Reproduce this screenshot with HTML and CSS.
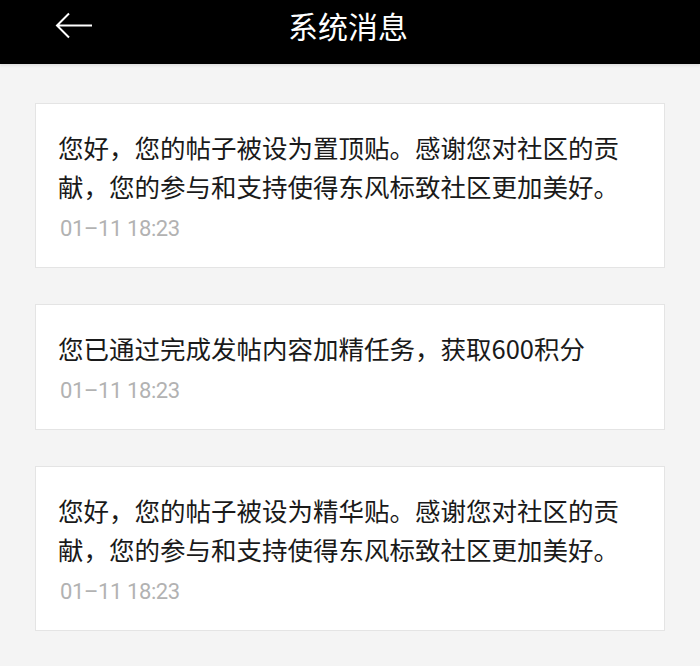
FILE: index.html
```html
<!DOCTYPE html>
<html lang="zh-CN">
<head>
  <meta charset="UTF-8">
  <meta name="viewport" content="width=device-width, initial-scale=1.0">
  <title>系统消息</title>
  <link rel="stylesheet" href="styles.css">
</head>
<body>
  <div class="top-bar">
    <span class="back-btn">
      <svg width="40" height="28" viewBox="0 0 40 28">
        <path d="M38 13.5 H3 M15 1.5 L3 13.5 L15 25.5" fill="none" stroke="#fff" stroke-width="2"/>
      </svg>
    </span>
    <h1 class="top-title">系统消息</h1>
  </div>

  <div class="msg-list">
    <div class="msg-card">
      <p class="msg-text">您好，您的帖子被设为置顶贴。感谢您对社区的贡献，您的参与和支持使得东风标致社区更加美好。</p>
      <div class="msg-time">01–11 18:23</div>
    </div>
    <div class="msg-card">
      <p class="msg-text">您已通过完成发帖内容加精任务，获取600积分</p>
      <div class="msg-time">01–11 18:23</div>
    </div>
    <div class="msg-card">
      <p class="msg-text">您好，您的帖子被设为精华贴。感谢您对社区的贡献，您的参与和支持使得东风标致社区更加美好。</p>
      <div class="msg-time">01–11 18:23</div>
    </div>
  </div>
</body>
</html>
```

FILE: styles.css
```css
/* page */
body {
  margin: 0;
  background-color: #f4f4f4;
  font-family: "Noto Sans CJK SC", "Noto Sans", sans-serif;
  color: #1a1a1a;
}

/* header bar */
.top-bar {
  position: relative;
  height: 64px;
  background-color: #000;
  box-shadow: 0 2px 2px #e2e2e2;
  display: flex;
  justify-content: center;
}
.back-btn {
  position: absolute;
  left: 54px;
  top: 12px;
  line-height: 0;
}
.top-title {
  margin: 0 0 0 -4px;
  padding-top: 5px;
  font-size: 30px;
  font-weight: normal;
  line-height: 40px;
  color: #fff;
}

/* message cards */
.msg-list {
  padding: 39px 35px 0;
  display: flex;
  flex-direction: column;
  gap: 36px;
}
.msg-card {
  background-color: #fff;
  border: 1px solid #e4e4e4;
  padding: 23px 40px 23px 22px;
}
.msg-text {
  margin: 0;
  font-size: 25.5px;
  line-height: 39px;
}
.msg-time {
  margin-top: 9px;
  padding-left: 2px;
  font-family: Roboto, "Noto Sans", sans-serif;
  font-size: 22px;
  letter-spacing: -0.4px;
  line-height: 30px;
  color: #b2b2b2;
}
```
